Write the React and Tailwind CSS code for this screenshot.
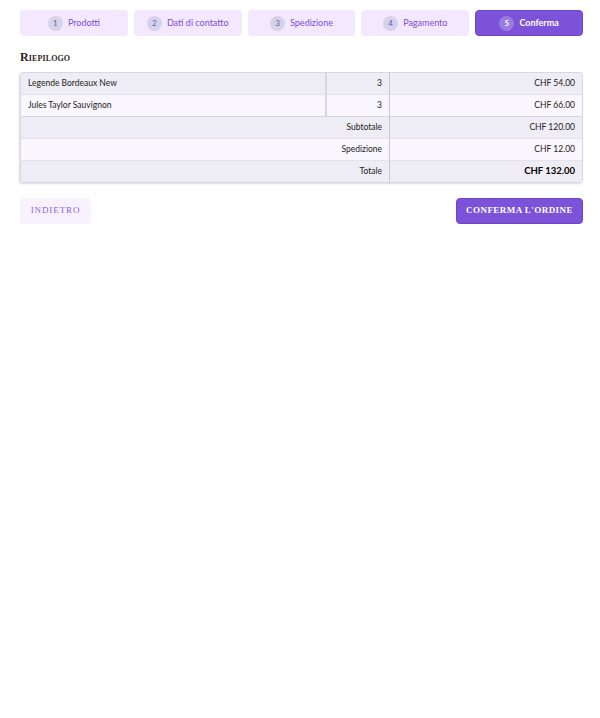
import React from "react";

const steps = ["Prodotti", "Dati di contatto", "Spedizione", "Pagamento", "Conferma"];

export default function App() {
  return (
    <div className="w-[600px] min-h-[718px] bg-white" style={{ fontFamily: "Lato, sans-serif" }}>
      <div className="ml-5 w-[563px] pt-[10px]">
        <div className="grid grid-cols-5 gap-[6px]">
          {steps.map((s, i) => {
            const active = i === 4;
            return (
              <div
                key={s}
                className={
                  "h-[26px] rounded-[4px] flex items-center justify-center gap-[5px] text-[9px] " +
                  (active
                    ? "bg-[#7b52d8] border border-[#6c45c9] text-white font-bold"
                    : "bg-[#f3e8ff] text-[#7c4fd6]")
                }
              >
                <span
                  className={
                    "w-[15px] h-[15px] rounded-full flex items-center justify-center text-[8px] " +
                    (active ? "bg-[#9a7be0] text-white" : "bg-[#d6d2ea] text-[#6c5bb0] font-normal")
                  }
                >
                  {i + 1}
                </span>
                <span>{s}</span>
              </div>
            );
          })}
        </div>

        <h2
          className="mt-[13px] text-[12px] leading-[16px] font-bold text-[#33251a] tracking-[0.01em]"
          style={{ fontFamily: "'Liberation Serif', serif", fontVariant: "small-caps" }}
        >
          Riepilogo
        </h2>

        <div className="mt-[7px] rounded-[3px] border border-[#d9d6e0] shadow-[-1px_1px_2px_rgba(0,0,0,0.15)] overflow-hidden text-[8.5px] text-[#222]">
          <div className="grid grid-cols-[306px_63px_1fr] h-[22px] bg-[#eeecf4] border-b border-[#e4e1ea]">
            <div className="flex items-center pl-[7px] border-r-2 border-[#d8d5de]">Legende Bordeaux New</div>
            <div className="flex items-center justify-end pr-[7px] border-r border-[#c9c6cf]">3</div>
            <div className="flex items-center justify-end pr-[7px]">CHF 54.00</div>
          </div>
          <div className="grid grid-cols-[306px_63px_1fr] h-[22px] bg-[#faf6fd] border-b border-[#d8d5de]">
            <div className="flex items-center pl-[7px] border-r-2 border-[#d8d5de]">Jules Taylor Sauvignon</div>
            <div className="flex items-center justify-end pr-[7px] border-r border-[#c9c6cf]">3</div>
            <div className="flex items-center justify-end pr-[7px]">CHF 66.00</div>
          </div>
          <div className="grid grid-cols-[369px_1fr] h-[22px] bg-[#eeecf4] border-b border-[#e4e1ea]">
            <div className="flex items-center justify-end pr-[7px] border-r border-[#c9c6cf]">Subtotale</div>
            <div className="flex items-center justify-end pr-[7px]">CHF 120.00</div>
          </div>
          <div className="grid grid-cols-[369px_1fr] h-[22px] bg-[#faf6fd] border-b border-[#e4e1ea]">
            <div className="flex items-center justify-end pr-[7px] border-r border-[#c9c6cf]">Spedizione</div>
            <div className="flex items-center justify-end pr-[7px]">CHF 12.00</div>
          </div>
          <div className="grid grid-cols-[369px_1fr] h-[21px] bg-[#eeecf4]">
            <div className="flex items-center justify-end pr-[7px] border-r border-[#c9c6cf]">Totale</div>
            <div className="flex items-center justify-end pr-[7px] font-bold text-[9.5px] text-black">CHF 132.00</div>
          </div>
        </div>

        <div className="mt-[15px] flex justify-between" style={{ fontFamily: "'Liberation Serif', serif" }}>
          <button className="w-[71px] h-[26px] rounded-[4px] bg-[#f8f2ff] text-[#8a5ce0] text-[9px] tracking-[0.1em]">
            INDIETRO
          </button>
          <button className="w-[127px] h-[26px] rounded-[4px] bg-[#7b52d8] border border-[#6c45c9] text-white text-[9px] font-bold tracking-[0.05em]">
            CONFERMA L'ORDINE
          </button>
        </div>
      </div>
    </div>
  );
}
